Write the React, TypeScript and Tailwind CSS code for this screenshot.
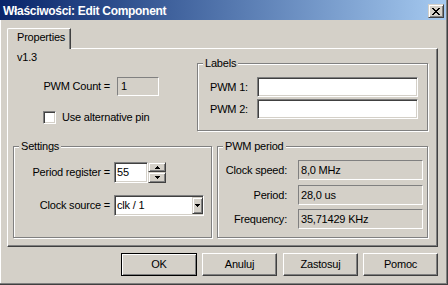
import React from "react";

const SUNKEN2 =
  "border border-t-[#808080] border-l-[#808080] border-b-white border-r-white shadow-[inset_1px_1px_0_#404040,inset_-1px_-1px_0_#d4d0c8]";
const SUNKEN1 =
  "border border-t-[#808080] border-l-[#808080] border-b-white border-r-white";
const RAISED =
  "border border-t-[#d4d0c8] border-l-[#d4d0c8] border-b-[#404040] border-r-[#404040] shadow-[inset_1px_1px_0_#fff,inset_-1px_-1px_0_#808080]";
const BUTTON =
  "border border-t-white border-l-white border-b-[#404040] border-r-[#404040] shadow-[inset_-1px_-1px_0_#808080]";

function GroupBox({
  label,
  className,
  children,
}: {
  label: string;
  className: string;
  children?: React.ReactNode;
}) {
  return (
    <div
      className={`relative border border-[#808080] shadow-[inset_1px_1px_0_#fff,1px_1px_0_#fff] ${className}`}
    >
      <span className="absolute left-[5px] top-[-7px] px-[2px] bg-[#d4d0c8] leading-[13px]">
        {label}
      </span>
      {children}
    </div>
  );
}

function CloseGlyph() {
  const r: [number, number, number][] = [
    [0, 0, 2], [6, 0, 2],
    [1, 1, 2], [5, 1, 2],
    [2, 2, 4],
    [3, 3, 2],
    [2, 4, 4],
    [1, 5, 2], [5, 5, 2],
    [0, 6, 2], [6, 6, 2],
  ];
  return (
    <svg width="8" height="7" viewBox="0 0 8 7" shapeRendering="crispEdges">
      {r.map(([x, y, w], i) => (
        <rect key={i} x={x} y={y} width={w} height={1} fill="#000" />
      ))}
    </svg>
  );
}

function Arrow({ up }: { up?: boolean }) {
  return (
    <svg width="5" height="3" viewBox="0 0 5 3" shapeRendering="crispEdges">
      {up ? (
        <>
          <rect x={2} y={0} width={1} height={1} fill="#000" />
          <rect x={1} y={1} width={3} height={1} fill="#000" />
          <rect x={0} y={2} width={5} height={1} fill="#000" />
        </>
      ) : (
        <>
          <rect x={0} y={0} width={5} height={1} fill="#000" />
          <rect x={1} y={1} width={3} height={1} fill="#000" />
          <rect x={2} y={2} width={1} height={1} fill="#000" />
        </>
      )}
    </svg>
  );
}

function ValueRow({ label, value, className }: { label: string; value: string; className: string }) {
  return (
    <div className={`flex items-center h-[20px] ${className}`}>
      <span className="w-[69px] text-right">{label}</span>
      <div className={`ml-[11px] w-[125px] h-[20px] pl-[2px] flex items-center ${SUNKEN1}`}>
        {value}
      </div>
    </div>
  );
}

export default function App() {
  return (
    <div className="w-[448px] h-[285px] bg-[#d4d0c8] font-['Liberation_Sans',Arial,sans-serif] text-[11px] tracking-[-0.2px] leading-[13px] text-black border-r border-b border-[#404040] overflow-hidden">
      <div className="h-full flex flex-col border-r border-b border-[#808080]">
        {/* Title bar */}
        <div className="h-[20px] shrink-0 flex items-start bg-gradient-to-r from-[#0a246a] to-[#a6caf0]">
          <span className="mt-[4px] ml-[3px] text-white font-bold text-[12px] leading-[14px] tracking-[-0.3px]">
            Właściwości: Edit Component
          </span>
          <div
            className={`ml-auto mr-[2px] mt-[4px] w-[16px] h-[14px] flex items-center justify-center bg-[#d4d0c8] ${RAISED}`}
          >
            <CloseGlyph />
          </div>
        </div>

        {/* Body */}
        <div className="flex-1 flex flex-col border-l border-white pt-[8px]">
          {/* Tab */}
          <div className="ml-[6px] w-[64px] h-[21px] -mb-[1px] relative z-10 bg-[#d4d0c8] border-l border-t border-white border-r border-r-[#404040] shadow-[inset_-1px_0_0_#808080] rounded-tl-[2px] pl-[9px] pt-[2px]">
            Properties
          </div>

          {/* Panel */}
          <div className="ml-[6px] w-[431px] h-[199px] border border-t-white border-l-white border-r-[#404040] border-b-[#404040] shadow-[inset_-1px_-1px_0_#808080] pl-[5px] flex flex-col">
            {/* Top row */}
            <div className="flex">
              <div className="w-[184px] flex flex-col">
                <div className="mt-[2px] ml-[4px]">v1.3</div>
                <div className="mt-[13px] flex items-center h-[19px]">
                  <span className="w-[97px] text-right">PWM Count =</span>
                  <div className={`ml-[7px] w-[42px] h-[19px] pl-[3px] flex items-center ${SUNKEN1}`}>
                    1
                  </div>
                </div>
                <div className="mt-[15px] ml-[30px] flex items-center h-[13px]">
                  <div className={`w-[13px] h-[13px] bg-white ${SUNKEN2}`} />
                  <span className="ml-[6px]">Use alternative pin</span>
                </div>
              </div>

              <GroupBox label="Labels" className="mt-[14px] w-[231px] h-[68px]">
                <div className="mt-[13px] ml-[12px] flex items-center h-[20px]">
                  <span className="w-[47px]">PWM 1:</span>
                  <div className={`w-[161px] h-[20px] bg-white ${SUNKEN2}`} />
                </div>
                <div className="mt-[2px] ml-[12px] flex items-center h-[20px]">
                  <span className="w-[47px]">PWM 2:</span>
                  <div className={`w-[161px] h-[20px] bg-white ${SUNKEN2}`} />
                </div>
              </GroupBox>
            </div>

            {/* Bottom row */}
            <div className="mt-[15px] flex">
              <GroupBox label="Settings" className="w-[199px] h-[92px]">
                <div className="mt-[15px] flex items-center h-[21px]">
                  <span className="w-[96px] text-right">Period register =</span>
                  <div className={`ml-[4px] w-[34px] h-[21px] bg-white pl-[2px] flex items-center ${SUNKEN2}`}>
                    55
                  </div>
                  <div className="w-[18px] h-[21px] flex flex-col">
                    <div className={`h-[10px] flex items-center justify-center ${RAISED}`}>
                      <Arrow up />
                    </div>
                    <div className={`h-[11px] flex items-center justify-center ${RAISED}`}>
                      <Arrow />
                    </div>
                  </div>
                </div>
                <div className="mt-[12px] flex items-center h-[21px]">
                  <span className="w-[96px] text-right">Clock source =</span>
                  <div className={`ml-[4px] w-[90px] h-[21px] bg-white pl-[1px] py-[1px] flex items-stretch ${SUNKEN2}`}>
                    <span className="flex-1 pl-[1px] flex items-center">clk / 1</span>
                    <div className={`w-[11px] bg-[#d4d0c8] flex items-center justify-center ${RAISED}`}>
                      <Arrow />
                    </div>
                  </div>
                </div>
              </GroupBox>

              <GroupBox label="PWM period" className="ml-[5px] w-[211px] h-[92px]">
                <ValueRow className="mt-[13px]" label="Clock speed:" value="8,0 MHz" />
                <ValueRow className="mt-[5px]" label="Period:" value="28,0 us" />
                <ValueRow className="mt-[4px]" label="Frequency:" value="35,71429 KHz" />
              </GroupBox>
            </div>
          </div>

          {/* Buttons */}
          <div className="mt-[6px] flex">
            <div className="ml-[120px] w-[76px] h-[23px] flex items-center justify-center border border-black shadow-[inset_1px_1px_0_#fff,inset_-1px_-1px_0_#808080]">
              OK
            </div>
            <div className={`ml-[5px] w-[75px] h-[23px] flex items-center justify-center ${BUTTON}`}>
              Anuluj
            </div>
            <div className={`ml-[6px] w-[75px] h-[23px] flex items-center justify-center ${BUTTON}`}>
              Zastosuj
            </div>
            <div className={`ml-[5px] w-[75px] h-[23px] flex items-center justify-center ${BUTTON}`}>
              Pomoc
            </div>
          </div>
        </div>
      </div>
    </div>
  );
}
